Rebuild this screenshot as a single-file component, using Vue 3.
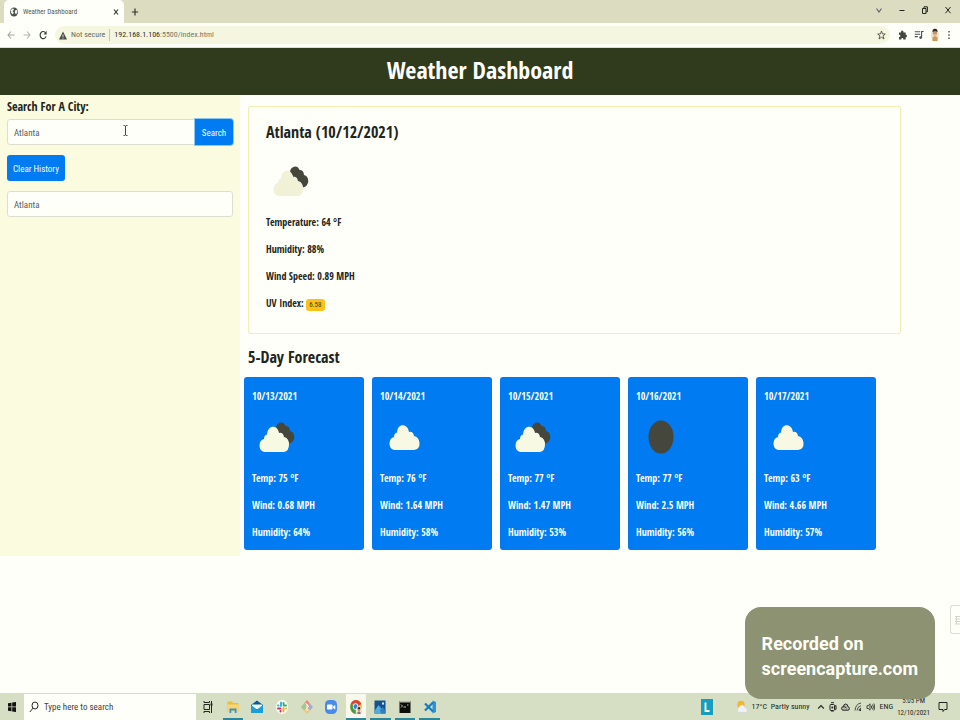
<script setup>
import { ref } from 'vue'

const city = ref('Atlanta')
const history = ref(['Atlanta'])
const url = { host: '192.168.1.106', path: ':5500/index.html' }

const current = {
  title: 'Atlanta (10/12/2021)',
  lines: ['Temperature: 64 °F', 'Humidity: 88%', 'Wind Speed: 0.89 MPH'],
  uv: '6.58',
}

const forecast = [
  { date: '10/13/2021', icon: 'broken', temp: '75 °F', wind: '0.68 MPH', humidity: '64%' },
  { date: '10/14/2021', icon: 'cloud', temp: '76 °F', wind: '1.64 MPH', humidity: '58%' },
  { date: '10/15/2021', icon: 'broken', temp: '77 °F', wind: '1.47 MPH', humidity: '53%' },
  { date: '10/16/2021', icon: 'clear', temp: '77 °F', wind: '2.5 MPH', humidity: '56%' },
  { date: '10/17/2021', icon: 'cloud', temp: '63 °F', wind: '4.66 MPH', humidity: '57%' },
]

const apps = [
  { name: 'taskview', open: false },
  { name: 'folder', open: true },
  { name: 'mail', open: false },
  { name: 'slack', open: false },
  { name: 'git', open: false },
  { name: 'zoom', open: false },
  { name: 'chrome', open: true },
  { name: 'photos', open: true },
  { name: 'terminal', open: true },
  { name: 'code', open: true },
]
</script>

<template>
  <div class="screen">
    <div class="tabs">
      <div class="tab">
        <svg width="10" height="10" viewBox="0 0 10 10"><ellipse cx="5" cy="5" rx="4" ry="4.500" fill="#4b4f50" /><path d="M1.600 3.200 4 1.200 5 2.600 3.600 4.200 4.800 5.600 3.800 7.600 2.200 6zM6.200 3.200 8 2.800 8.400 5 7 7.600 5.800 5.600z" fill="#f4f5ee" /></svg>
        <span class="tab-title">Weather Dashboard</span>
        <button class="icon-btn" aria-label="Close tab"><svg width="8" height="8" viewBox="0 0 8 8"><path d="M2 1.500 6 6.500M6 1.500 2 6.500" stroke="#33362f" stroke-width="1.200" /></svg></button>
      </div>
      <button class="icon-btn new-tab" aria-label="New tab"><svg width="8" height="8" viewBox="0 0 8 8"><path d="M4 .5v7M.8 4h6.400" stroke="#33362f" stroke-width="1.200" /></svg></button>
      <div class="window-buttons">
        <button class="icon-btn" aria-label="Tab search"><svg width="8" height="8" viewBox="0 0 8 8"><path d="M1.500 2.500 4 6l2.500-3.500" fill="none" stroke="#5a5f77" stroke-width="1.100" /></svg></button>
        <button class="icon-btn" aria-label="Minimize"><svg width="8" height="8" viewBox="0 0 8 8"><path d="M1.500 4.500h5" stroke="#23261f" /></svg></button>
        <button class="icon-btn" aria-label="Restore"><svg width="8" height="8" viewBox="0 0 8 8"><path d="M1.500 2.500h3.500v5H1.500zM3 2.500V.8h3.400v5H5" fill="none" stroke="#23261f" /></svg></button>
        <button class="icon-btn" aria-label="Close"><svg width="8" height="8" viewBox="0 0 8 8"><path d="M1.500 1 6.500 7.200M6.500 1 1.500 7.200" stroke="#23261f" /></svg></button>
      </div>
    </div>

    <div class="toolbar">
      <button class="icon-btn" aria-label="Back"><svg width="8" height="10" viewBox="0 0 8 10"><path d="M7.500 5H1M4 1.500 1 5l3 3.500" fill="none" stroke="#a4a69d" stroke-width="1.100" /></svg></button>
      <button class="icon-btn" aria-label="Forward"><svg width="8" height="10" viewBox="0 0 8 10"><path d="M.5 5H7M4 1.500 7 5 4 8.500" fill="none" stroke="#b5b7ad" stroke-width="1.100" /></svg></button>
      <button class="icon-btn" aria-label="Reload"><svg width="8" height="10" viewBox="0 0 8 10"><path d="M6.600 3A3 3.600 0 1 0 7 6.300" fill="none" stroke="#3c4038" stroke-width="1.200" /><path d="M7.600.8v3.600H4.600z" fill="#3c4038" /></svg></button>
      <div class="address">
        <svg width="8" height="9" viewBox="0 0 8 9"><path d="M4 .4 8 8.600H0z" fill="#4b4e47" /><path d="M4 3.500v2.400M4 6.600v1" stroke="#f2f3e4" stroke-width=".9" /></svg>
        <span class="insecure">Not secure</span>
        <span class="url">{{ url.host }}<span class="path">{{ url.path }}</span></span>
        <svg class="star" width="9" height="10" viewBox="0 0 9 10"><path d="M4.500 1 5.500 3.900 8.300 4 6.100 5.900 7 9 4.500 7.200 2 9 2.900 5.900.7 4 3.500 3.900z" fill="none" stroke="#4b4e47" stroke-width=".9" /></svg>
      </div>
      <div class="extensions">
        <svg width="9" height="10" viewBox="0 0 9 10"><path d="M1 2.500h2Q2.800.6 4.200.6T5.500 2.500h2.200v2.200Q9 4.700 9 6T7.700 7.200V9.400H5.400Q5.400 8 4.300 8T3.200 9.400H1V7Q2.400 7 2.400 5.900T1 4.800z" fill="#43473f" /></svg>
        <svg width="10" height="10" viewBox="0 0 10 10"><path d="M.8 1.800h5.400M.8 4.200h5.400M.8 6.600h3" stroke="#4b4f58" stroke-width="1.100" /><path d="M7.600 7.500V1.500h2" fill="none" stroke="#4b4f58" stroke-width="1.100" /><circle cx="6.700" cy="7.600" r="1.400" fill="#4b4f58" /></svg>
        <svg width="8" height="14" viewBox="1 0 8 14"><ellipse cx="5" cy="7" rx="4" ry="6.400" fill="#ece5cc" /><path d="M2.400 13V9.500Q5 7 7.600 9.500V13z" fill="#c99a5c" /><ellipse cx="5" cy="5" rx="2.200" ry="3" fill="#e0b391" /><path d="M2.500 4Q2.400.8 5 .8T7.500 4Q5 2.400 2.500 4z" fill="#33261e" /><path d="M3.400 5h1.200M5.400 5h1.200" stroke="#4c3a30" stroke-width=".8" /></svg>
        <svg width="6" height="10" viewBox="0 0 6 10"><path d="M3 1v1.600M3 4.200v1.600M3 7.400V9" stroke="#43473f" stroke-width="1.400" /></svg>
      </div>
    </div>

    <header class="banner"><h1>Weather Dashboard</h1></header>

    <div class="content">
      <aside class="sidebar">
        <form class="search-form" @submit.prevent>
          <label for="city">Search For A City:</label>
          <div class="search-row">
            <input id="city" v-model="city" type="text" />
            <button type="submit" class="btn search-btn">Search</button>
          </div>
        </form>
        <button class="btn" type="button">Clear History</button>
        <input v-for="(item, i) in history" :key="i" class="past" type="text" readonly :value="item" :aria-label="'Past search ' + item" />
        <svg class="cursor" width="5" height="11" viewBox="0 0 5 11"><path d="M.5.5h1.300L2.500 1.200 3.200.5h1.300M2.500 1v9M.5 10.500h1.300l.7-.7.7.7h1.300" fill="none" stroke="#33362f" stroke-width=".9" /></svg>
      </aside>

      <main class="main">
        <section class="today">
          <h2>{{ current.title }}</h2>
          <svg class="weather" width="50" height="50" viewBox="0 0 50 50">
            <path d="M24 16a5 6 0 0 1 9.500-2 4.500 5.500 0 0 1 4.500 5 5 6 0 0 1 3 10 5 6 0 0 1-7 1z" fill="#45463c" />
            <path d="M13 40a5 6.500 0 0 1-1-13Q12 23 15 22.500C15.500 13 25.500 12 27 21q4-1 5 4 5 1 5 7.500T32 40z" fill="#f0f1d6" />
          </svg>
          <p v-for="line in current.lines" :key="line">{{ line }}</p>
          <p>UV Index: <span class="badge">{{ current.uv }}</span></p>
        </section>

        <h2 class="forecast-title">5-Day Forecast</h2>
        <section class="forecast">
          <article v-for="day in forecast" :key="day.date" class="day">
            <p>{{ day.date }}</p>
            <svg class="weather" width="50" height="50" viewBox="0 0 50 50">
              <template v-if="day.icon === 'broken'">
                <path d="M24 16a5 6 0 0 1 9.500-2 4.500 5.500 0 0 1 4.500 5 5 6 0 0 1 3 10 5 6 0 0 1-7 1z" fill="#45463c" />
                <path d="M13 40a5 6.500 0 0 1-1-13Q12 23 15 22.500C15.500 13 25.500 12 27 21q4-1 5 4 5 1 5 7.500T32 40z" fill="#f8f9e2" />
              </template>
              <path v-else-if="day.icon === 'cloud'" d="M15 38a5 6.500 0 0 1-1-13Q14 21 17 20.500C17.500 11 27.500 11 29 20q4-1 5 4 5 1 5.500 7T34 38z" fill="#f8f9e2" />
              <ellipse v-else cx="25" cy="25" rx="12.500" ry="16.500" fill="#45463c" />
            </svg>
            <p>Temp: {{ day.temp }}</p>
            <p>Wind: {{ day.wind }}</p>
            <p>Humidity: {{ day.humidity }}</p>
          </article>
        </section>
      </main>
    </div>

    <footer class="taskbar">
      <button class="icon-btn start" aria-label="Start"><svg width="10" height="12" viewBox="0 0 10 12"><path d="M1 2.300 4.500 1.700V5.600H1zM5.200 1.600 9 1V5.600H5.200zM1 6.300H4.500V10.300L1 9.700zM5.200 6.300H9V11L5.200 10.400z" fill="#10130f" /></svg></button>
      <label class="task-search">
        <svg width="10" height="12" viewBox="0 0 10 12"><ellipse cx="6" cy="4.500" rx="3" ry="3.500" fill="none" stroke="#23261f" /><path d="M4 7.200.8 11" stroke="#23261f" /></svg>
        <input type="text" placeholder="Type here to search" />
      </label>
      <nav class="apps" aria-label="Apps">
        <button v-for="app in apps" :key="app.name" class="app" :class="{ open: app.open, active: app.name === 'chrome' }" :aria-label="app.name">
          <svg width="14" height="16" viewBox="0 0 14 16">
            <g v-if="app.name === 'taskview'" fill="none" stroke="#23261f"><path d="M3 5.500h5.500v5H3zM3 2v1.500h5.500V2M3 14v-1.500h5.500V14M10.500 2v12" /><path d="M10.500 4.500v2" stroke-width="2" /></g>
            <g v-else-if="app.name === 'folder'"><path d="M1.500 2.500H6L7 4h5.500v9h-11z" fill="#edbd3c" /><path d="M1.500 5.500h11V13h-11z" fill="#f7d774" /><path d="M3.500 9.500h7V14H8.800v-2.500H5.200V14H3.500z" fill="#3f8ec4" /></g>
            <g v-else-if="app.name === 'mail'"><path d="M1 6 7 1.500 13 6v8H1z" fill="#075a9c" /><path d="M2 5.500h10V10H2z" fill="#eef6f8" /><path d="M1 6l6 4.500L13 6v8H1z" fill="#1c9ed8" /></g>
            <g v-else-if="app.name === 'slack'"><ellipse cx="7" cy="8" rx="6" ry="7" fill="#fffff4" /><g fill="none" stroke-linecap="round" stroke-width="2"><path d="M6 3.500V7" stroke="#36b6dd" /><path d="M11 6.500H8.700M8.500 4v1" stroke="#2eae7a" /><path d="M8.500 9v3.500" stroke="#e2af35" /><path d="M3 9.500h2.500M5.500 12v.5" stroke="#d8285e" /><path d="M3 6.500h.5" stroke="#36b6dd" /><path d="M11 9.500h.2" stroke="#e2af35" /></g></g>
            <g v-else-if="app.name === 'git'"><path d="M7 1 10 4.500 7 8 4 4.500z" fill="#e78c79" /><path d="M4 4.500 7 8 4 11.500 1 8z" fill="#a8c487" /><path d="M10 4.500 13 8l-3 3.500L7 8z" fill="#a6a8da" /><path d="M7 8l3 3.500L7 15l-3-3.500z" fill="#e7c97b" /><path d="M5.500 4 9 8M7 5v7" stroke="#fff" /></g>
            <g v-else-if="app.name === 'zoom'"><rect x="1" y="1" width="12" height="14" rx="4.500" fill="#4a8bea" /><rect x="3" y="5.500" width="5.500" height="5" rx="1" fill="#fff" /><path d="M9 7.500 11.300 6v4.500L9 9z" fill="#fff" /></g>
            <g v-else-if="app.name === 'chrome'"><ellipse cx="7" cy="8" rx="6" ry="7" fill="#e9bd38" /><path d="M7 8 1.800 4.500Q3.500 1 7 1t5.300 4z" fill="#d8463a" /><path d="M7 8 1.800 4.500Q-.2 13 6.500 15z" fill="#3f9a55" /><ellipse cx="6.500" cy="7.500" rx="2.600" ry="3.200" fill="#fff" /><ellipse cx="6.500" cy="7.500" rx="2" ry="2.500" fill="#3d7de0" /><ellipse cx="10" cy="11.500" rx="3.200" ry="4" fill="#ede4d2" /><ellipse cx="10" cy="10.500" rx="1.300" ry="1.900" fill="#c68c6c" /><path d="M8.600 10Q8.500 8 10 8t1.400 2z" fill="#33261e" /><path d="M8.500 15v-2q1.500-1 3 0v2z" fill="#8c6f7c" /></g>
            <g v-else-if="app.name === 'photos'"><path d="M1.500 1.500h11v13h-11z" fill="#14528f" /><path d="M1.500 12 5.500 6l7 8.500h-11z" fill="#54a9de" /><path d="M7 11 9.500 8l3 3.500v3H8z" fill="#2f7fc0" /><ellipse cx="10" cy="4.500" rx="1" ry="1.200" fill="#e7f2f3" /></g>
            <g v-else-if="app.name === 'terminal'"><path d="M1.500 2h11v12h-11z" fill="#0c0d0a" /><path d="M1.500 2h11v1.500h-11z" fill="#b8bab0" /><path d="M3 5.500 4.500 7 3 8.500M5.500 8H8M9 6h1.500" fill="none" stroke="#e9eae4" stroke-width=".8" /></g>
            <g v-else><path d="M9.500 1.500 13 3v10l-3.500 1.500z" fill="#2596dc" /><path d="M10 3.500 2 11.500M10 12.500 2 4.500" stroke="#167bc0" stroke-width="2.200" /></g>
          </svg>
        </button>
      </nav>
      <div class="tray">
        <span class="l-app"><svg width="12" height="16" viewBox="0 0 12 16"><path d="M0 0h12v16H0z" fill="#159fbd" /><path d="M4.500 3.500v8.500h4" fill="none" stroke="#fff" stroke-width="1.800" /></svg></span>
        <span class="temp"><svg width="12" height="14" viewBox="0 0 12 14"><ellipse cx="5" cy="5" rx="3.600" ry="4.200" fill="#f6b32e" /><path d="M3 12.500a2.200 2.700 0 0 1 0-5.200Q4 4.500 6.500 5T9 7.600q2.500.2 2.500 2.600T9.500 12.500z" fill="#eef2f4" stroke="#c9d1d2" stroke-width=".5" /></svg>17°C&nbsp; Partly sunny</span>
        <svg width="8" height="10" viewBox="0 0 8 10"><path d="M1.200 6.500 4 3.500l2.800 3" fill="none" stroke="#23261f" stroke-width="1.100" /></svg>
        <svg width="8" height="10" viewBox="0 0 8 10"><rect x="1" y="2.500" width="4.500" height="6" rx="1" fill="none" stroke="#23261f" /><path d="M2 .7h3M2 10h3M5.500 4.500 7 3.500v4L5.500 6.500" fill="none" stroke="#23261f" /><circle cx="3.300" cy="5.500" r="1" fill="#23261f" /></svg>
        <svg width="9" height="10" viewBox="0 0 9 10"><path d="M2 8.200Q.5 8 .6 6.300T2.300 4.700Q2.700 2 4.700 2t2.200 2.700Q8.500 5 8.400 6.600T6.900 8.200z" fill="#b9bdae" stroke="#23261f" /><path d="M2.300 4.900Q4 4 5.500 6.100" stroke="#23261f" fill="none" /></svg>
        <svg width="8" height="10" viewBox="0 0 8 10"><path d="M1 8.500Q1.500 2 7 1M3 8.500Q3.500 4.500 7 3.700M5 8.500Q5.300 6.500 7 6.200" fill="none" stroke="#4a4d45" /><path d="M7 6.500v2.500H5z" fill="#23261f" /></svg>
        <svg width="9" height="10" viewBox="0 0 9 10"><path d="M1 3.700h1.300L4 1.800v6.400L2.300 6.500H1zM5.200 3.500q1 1.500 0 3M6.500 2.500q1.800 2.500 0 5M7.800 1.500q2 3.500 0 7" fill="none" stroke="#33362f" stroke-width=".9" /></svg>
        <span class="lang">ENG</span>
        <time class="clock"><span>5:05 PM</span><span>12/10/2021</span></time>
        <svg class="notify" width="10" height="12" viewBox="0 0 10 12"><path d="M1 1.500h8v7H6.500L5 10.500V8.500H1z" fill="none" stroke="#23261f" /></svg>
      </div>
    </footer>

    <div class="watermark">Recorded on<br />screencapture.com</div>
    <div class="side-widget"><svg width="8" height="12" viewBox="0 0 8 12"><path d="M1 2.500h6M1 5h6M1 7.500h6M1 10h6M2.500 2v8" stroke="#d4d5cb" fill="none" /></svg></div>
  </div>
</template>

<style>
body { margin: 0; background: #fffffa; }
</style>

<style scoped>
* { box-sizing: border-box; }
.screen {
  position: relative;
  display: flex;
  flex-direction: column;
  min-height: 100vh;
  overflow: hidden;
  background: #fffffa;
  color: #212520;
  font-family: "Open Sans Condensed", "Open Sans", sans-serif;
  font-size: 10px;
  line-height: 16px;
}
button, input { font: inherit; color: inherit; }
svg { display: block; flex: none; }
h1, h2, p { margin: 0; }
.icon-btn { display: flex; align-items: center; justify-content: center; padding: 0; border: 0; background: none; }

.tabs { display: flex; align-items: stretch; height: 23px; padding-left: 4px; background: #dbdcc0; }
.tab { display: flex; align-items: center; gap: 4px; width: 120px; padding: 0 4px 0 5px; border-radius: 5px 5px 0 0; background: #fffffa; }
.tab-title { flex: 1; color: #55584f; font-family: "Roboto Condensed", sans-serif; font-size: 7px; }
.new-tab { margin-left: 7px; }
.window-buttons { display: flex; gap: 15px; margin: 0 8px 4px auto; }

.toolbar { display: flex; align-items: center; gap: 8px; height: 25px; padding: 0 8px 0 7px; border-bottom: 1px solid #dddecb; font-family: "Roboto Condensed", sans-serif; font-size: 8px; }
.address { display: flex; flex: 1; align-items: center; gap: 4px; height: 18px; padding: 0 4px; border-radius: 9px; background: #f5f6e0; }
.insecure { padding-right: 4px; border-right: 1px solid #c3c5b7; color: #666a60; line-height: 12px; }
.url { color: #2b2e27; }
.path { color: #74776c; }
.star { margin-left: auto; }
.extensions { display: flex; align-items: center; gap: 7px; }

.banner { display: flex; align-items: center; justify-content: center; height: 47px; padding-bottom: 3px; background: #303a1c; color: #fffffa; }
.banner h1 { font-size: 24px; line-height: 32px; font-weight: 700; }

.content { display: flex; flex: 1; align-items: flex-start; }
.sidebar { position: relative; display: flex; flex-direction: column; align-items: flex-start; gap: 10px; width: 25%; min-height: 461px; padding: 3px 7px 0; background: #fafbdf; }
.search-form { width: 100%; }
.search-form label { display: block; margin-bottom: 3px; font-size: 12px; line-height: 18px; font-weight: 700; }
.search-row { display: flex; height: 26px; }
.sidebar input { flex: 1; min-width: 0; padding: 2px 6px 0; border: 1px solid #dcdecf; border-radius: 3px 0 0 3px; background: #fffffa; color: #595d55; font-family: "Roboto Condensed", sans-serif; font-size: 9px; }
.sidebar .past { flex: none; width: 100%; height: 26px; border-radius: 3px; }
.btn { height: 26px; padding: 2px 6px 0; border: 0; border-radius: 3px; background: #007bf2; color: #f4fbf5; font-family: "Roboto Condensed", sans-serif; font-size: 9px; }
.search-btn { width: 38px; border-radius: 0 3px 3px 0; box-shadow: 0 0 0 1px #8fc6ee; }
.cursor { position: absolute; left: 123px; top: 30px; }

.main { flex: 1; padding: 11px 59px 0 8px; font-weight: 700; }
.today { padding: 13px 17px 22px; border: 1px solid #f0f0b4; border-radius: 2px; }
h2 { font-size: 16px; line-height: 24px; font-weight: 700; }
.today .weather { margin: 12px 0 8px; }
.today p + p { margin-top: 11px; }
.badge { display: inline-block; padding: 0 3px; border-radius: 3px; background: #fbc117; color: #3a3a20; font-family: "Roboto Condensed", sans-serif; font-weight: 400; font-size: 7px; line-height: 12px; }
.forecast-title { margin: 11px 0 8px; }
.forecast { display: grid; grid-template-columns: repeat(5, 120px); gap: 8px; margin: 0 -4px; }
.day { padding: 11px 8px 10px; border-radius: 3px; background: #007bf2; color: #fafcef; }
.day .weather { margin: 8px 0; }
.day p + p { margin-top: 11px; }

.taskbar { display: flex; align-items: center; height: 27px; border-top: 1px solid #d9dbc9; background: #d6dec3; font-family: "Roboto Condensed", sans-serif; font-size: 9px; }
.start { width: 24px; }
.task-search { display: flex; align-items: center; gap: 5px; width: 172px; height: 26px; padding: 0 5px; background: #fffffa; }
.task-search input { flex: 1; min-width: 0; padding: 0; border: 0; background: none; font-size: 9px; }
.task-search input::placeholder { color: #3e423a; opacity: 1; }
.apps { display: grid; grid-template-columns: repeat(10, 1fr); width: 246px; height: 26px; }
.app { display: flex; align-items: center; justify-content: center; margin: 0 2px; padding: 2px 0 0; border: 0; border-bottom: 2px solid transparent; background: none; }
.app.open { border-bottom-color: #2e8799; }
.app.active { background: #f8f9ec; }
.tray { display: flex; align-items: center; gap: 4px; margin-left: auto; padding-right: 12px; }
.l-app { margin-right: 19px; }
.temp { display: flex; align-items: center; gap: 4px; margin-right: 4px; white-space: pre; font-size: 8px; }
.lang { font-size: 8px; }
.clock { display: flex; flex-direction: column; align-items: center; font-size: 7px; line-height: 12px; }
.notify { margin-left: 4px; }

.watermark { position: absolute; right: 25px; bottom: 21px; padding: 24px 17px 18px; border-radius: 16px; background: #8c9272; color: #fffff8; font: 700 18px/25px Roboto, sans-serif; }
.side-widget { position: absolute; right: 0; bottom: 86px; display: flex; align-items: center; width: 10px; height: 29px; padding-left: 3px; border: 1px solid #dcddd0; border-right: 0; border-radius: 3px 0 0 3px; background: #fffffa; overflow: hidden; }
</style>
